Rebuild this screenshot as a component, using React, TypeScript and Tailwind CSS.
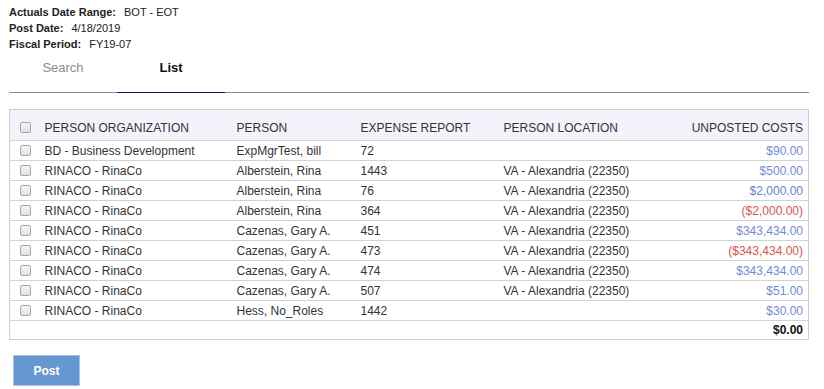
import React from 'react';

interface Row {
  org: string;
  person: string;
  report: string;
  location: string;
  cost: string;
  tone: 'blue' | 'deep' | 'red';
}

const rows: Row[] = [
  { org: 'BD - Business Development', person: 'ExpMgrTest, bill', report: '72', location: '', cost: '$90.00', tone: 'blue' },
  { org: 'RINACO - RinaCo', person: 'Alberstein, Rina', report: '1443', location: 'VA - Alexandria (22350)', cost: '$500.00', tone: 'blue' },
  { org: 'RINACO - RinaCo', person: 'Alberstein, Rina', report: '76', location: 'VA - Alexandria (22350)', cost: '$2,000.00', tone: 'deep' },
  { org: 'RINACO - RinaCo', person: 'Alberstein, Rina', report: '364', location: 'VA - Alexandria (22350)', cost: '($2,000.00)', tone: 'red' },
  { org: 'RINACO - RinaCo', person: 'Cazenas, Gary A.', report: '451', location: 'VA - Alexandria (22350)', cost: '$343,434.00', tone: 'blue' },
  { org: 'RINACO - RinaCo', person: 'Cazenas, Gary A.', report: '473', location: 'VA - Alexandria (22350)', cost: '($343,434.00)', tone: 'red' },
  { org: 'RINACO - RinaCo', person: 'Cazenas, Gary A.', report: '474', location: 'VA - Alexandria (22350)', cost: '$343,434.00', tone: 'blue' },
  { org: 'RINACO - RinaCo', person: 'Cazenas, Gary A.', report: '507', location: 'VA - Alexandria (22350)', cost: '$51.00', tone: 'blue' },
  { org: 'RINACO - RinaCo', person: 'Hess, No_Roles', report: '1442', location: '', cost: '$30.00', tone: 'blue' },
];

const toneClass = {
  blue: 'text-[#7489d6]',
  deep: 'text-[#5a86d4]',
  red: 'text-[#d9534f]',
};

const Checkbox = () => (
  <span className="block w-[11px] h-[11px] rounded-[2px] border border-[#a6a6a6] bg-gradient-to-b from-[#f6f6f6] to-[#e2e2e2]" />
);

const InfoLine = ({ label, value }: { label: string; value: string }) => (
  <div className="leading-[16px] text-[11px]">
    <span className="font-bold">{label}:</span>
    <span className="ml-[8px]">{value}</span>
  </div>
);

const App = () => {
  return (
    <div className="w-[824px] h-[389px] bg-white text-[#222] px-[9px] pt-[4px] font-['Liberation_Sans',Arial,sans-serif]">
      <InfoLine label="Actuals Date Range" value="BOT - EOT" />
      <InfoLine label="Post Date" value="4/18/2019" />
      <InfoLine label="Fiscal Period" value="FY19-07" />

      <div className="w-[800px] flex border-b border-[#8a8a8a]">
        <div className="w-[108px] h-[40px] pt-[8px] text-center text-[13px] leading-[16px] text-[#8c8c8c]">
          Search
        </div>
        <div className="w-[108px] h-[41px] -mb-px pt-[8px] text-center text-[13px] leading-[16px] font-bold text-[#111] border-b border-[#0b1a5c]">
          List
        </div>
      </div>

      <table className="mt-[16px] w-[800px] table-fixed border-collapse border border-[#cfcfcf] text-[12px] text-[#333]">
        <colgroup>
          <col className="w-[35px]" />
          <col className="w-[192px]" />
          <col className="w-[124px]" />
          <col className="w-[143px]" />
          <col className="w-[180px]" />
          <col />
        </colgroup>
        <thead>
          <tr className="h-[31px] bg-[#f4f3fc] border-b border-[#d2d2d2]">
            <th className="pl-[10px] pt-[5px] align-middle">
              <Checkbox />
            </th>
            <th className="pt-[5px] text-left font-normal">PERSON ORGANIZATION</th>
            <th className="pt-[5px] text-left font-normal">PERSON</th>
            <th className="pt-[5px] text-left font-normal">EXPENSE REPORT</th>
            <th className="pt-[5px] text-left font-normal">PERSON LOCATION</th>
            <th className="pt-[5px] pr-[5px] text-right font-normal">UNPOSTED COSTS</th>
          </tr>
        </thead>
        <tbody>
          {rows.map((row, i) => (
            <tr key={i} className="h-[20px] border-b border-[#d2d2d2]">
              <td className="pl-[10px] align-middle">
                <Checkbox />
              </td>
              <td>{row.org}</td>
              <td>{row.person}</td>
              <td>{row.report}</td>
              <td>{row.location}</td>
              <td className={`pr-[5px] text-right ${toneClass[row.tone]}`}>{row.cost}</td>
            </tr>
          ))}
          <tr className="h-[17px]">
            <td colSpan={6} className="pr-[5px] text-right font-bold text-[#111]">
              $0.00
            </td>
          </tr>
        </tbody>
      </table>

      <button className="mt-[15px] ml-[4px] w-[67px] h-[31px] bg-[#6597d1] border border-[#a9c3e2] text-white text-[12px] font-bold">
        Post
      </button>
    </div>
  );
};

export default App;
